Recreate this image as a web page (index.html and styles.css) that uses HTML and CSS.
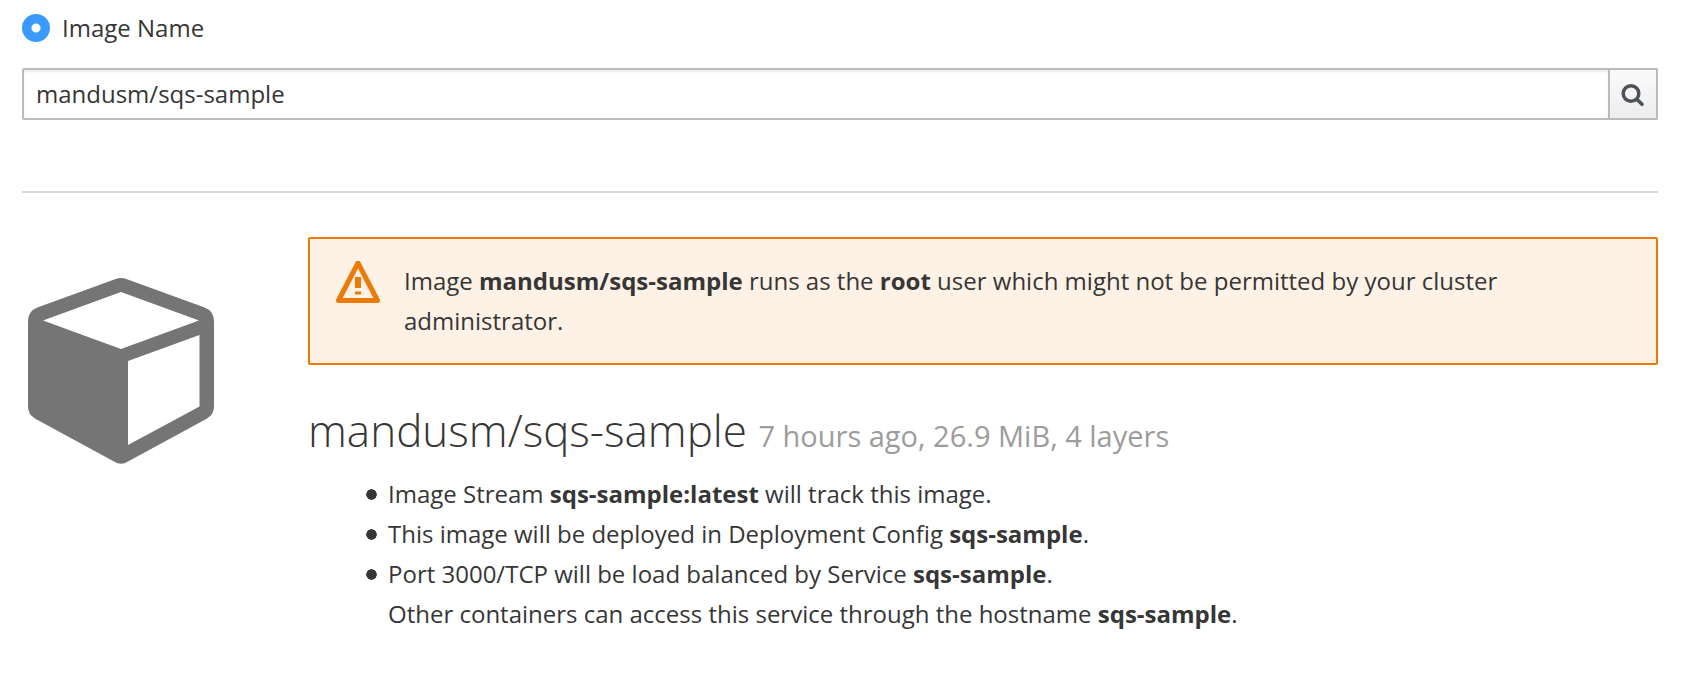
FILE: index.html
```html
<!DOCTYPE html>
<html lang="en">
<head>
<meta charset="utf-8">
<title>Deploy Image</title>
<link rel="stylesheet" href="styles.css">
</head>
<body>
<main class="page">
  <form class="image-form">
    <label class="source-option">
      <input class="source-radio" type="radio" name="source" checked>
      Image Name
    </label>
    <div class="search-group">
      <input class="search-input" type="text" value="mandusm/sqs-sample" aria-label="Image name">
      <button class="search-button" type="button" aria-label="Find image">
        <svg class="search-icon" viewBox="0 0 24 24" aria-hidden="true">
          <circle cx="10" cy="11.500" r="7.800" fill="none" stroke="#4d5258" stroke-width="3.500"/>
          <path d="M15.800 17.300L21 22.300" stroke="#4d5258" stroke-width="3.600" stroke-linecap="round"/>
        </svg>
      </button>
    </div>
  </form>
  <hr class="divider">
  <section class="result">
    <svg class="cube-icon" viewBox="28 278 186 186" aria-hidden="true">
      <path fill="#757575" fill-rule="evenodd" d="M115 279.2Q121 276.8 127 279.2L204 307.3Q214 311 214 321.5V406.5Q214 414.500 206.700 418.700L128 461.500Q121 466 114 461.500L35.300 418.700Q28 414.500 28 406.500V321.500Q28 311 38 307.300ZM121 292L43 320.500L121 349L199 320.500ZM128 361V445L199.500 406.500V335Z"/>
    </svg>
    <div class="details">
      <div class="alert" role="alert">
        <svg class="alert-icon" viewBox="0 0 44 44" aria-hidden="true">
          <path d="M22 2L41.500 39.500H2.500Z" fill="none" stroke="#ec7a08" stroke-width="5" stroke-linejoin="round"/>
          <path d="M19 16h6v11h-6zM19 30.500h6v3h-6z" fill="#ec7a08"/>
        </svg>
        <p class="alert-text">Image <strong>mandusm/sqs-sample</strong> runs as the <strong>root</strong> user which might not be permitted by your cluster administrator.</p>
      </div>
      <h2 class="title">mandusm/sqs-sample <small class="meta">7 hours ago, 26.9 MiB, 4 layers</small></h2>
      <ul class="notes">
        <li>Image Stream <strong>sqs-sample:latest</strong> will track this image.</li>
        <li>This image will be deployed in Deployment Config <strong>sqs-sample</strong>.</li>
        <li>Port 3000/TCP will be load balanced by Service <strong>sqs-sample</strong>.<br>Other containers can access this service through the hostname <strong>sqs-sample</strong>.</li>
      </ul>
    </div>
  </section>
</main>
</body>
</html>
```
FILE: styles.css
```css
* {
  box-sizing: border-box;
}

body {
  margin: 0;
  background: #fff;
  color: #363636;
  font-family: "Open Sans", sans-serif;
  font-size: 24px;
  line-height: 40px;
}

.page {
  padding: 8px 24px 40px 22px;
}

.source-option {
  display: flex;
  align-items: center;
  gap: 12px;
}

.source-radio {
  appearance: none;
  width: 28px;
  height: 28px;
  margin: 0;
  border-radius: 50%;
  background: radial-gradient(circle, #fff 4px, #3b99fc 5px);
}

.search-group {
  display: flex;
  margin-top: 20px;
}

.search-input {
  flex: 1;
  min-width: 0;
  height: 52px;
  padding: 0 12px 2px;
  border: 2px solid #bbb;
  border-radius: 2px 0 0 2px;
  box-shadow: inset 0 2px 2px rgba(3, 3, 3, 0.075);
  color: inherit;
  font: inherit;
}

.search-button {
  display: flex;
  align-items: center;
  justify-content: center;
  width: 48px;
  padding: 0;
  border: 2px solid #bbb;
  border-left: 0;
  border-radius: 0 2px 2px 0;
  background: linear-gradient(#fafafa, #ededed);
}

.search-icon {
  width: 24px;
  height: 24px;
  overflow: visible;
}

.divider {
  margin: 71px 0 44px;
  border: 0;
  border-top: 2px solid #d9d9d9;
}

.result {
  display: grid;
  grid-template-columns: 186px 1fr;
  gap: 94px;
  padding-left: 6px;
}

.cube-icon {
  width: 186px;
  height: 186px;
  margin-top: 41px;
}

.alert {
  display: flex;
  gap: 24px;
  padding: 22px 96px 22px 26px;
  border: 2px solid #ec7a08;
  border-radius: 2px;
  background: #fdf2e5;
}

.alert-icon {
  flex: none;
  width: 44px;
  height: 44px;
}

.alert-text {
  margin: 0;
}

.title {
  margin: 41px 0 14px;
  font-size: 44px;
  font-weight: 300;
  line-height: 48px;
}

.meta {
  color: #9c9c9c;
  font-size: 29px;
  font-weight: 400;
}

.notes {
  margin: 0;
  padding-left: 58px;
  list-style: none;
}

.notes li {
  padding-left: 22px;
  background: radial-gradient(circle closest-side, #363636 90%, transparent) 0 15px / 11px 11px no-repeat;
}
```
